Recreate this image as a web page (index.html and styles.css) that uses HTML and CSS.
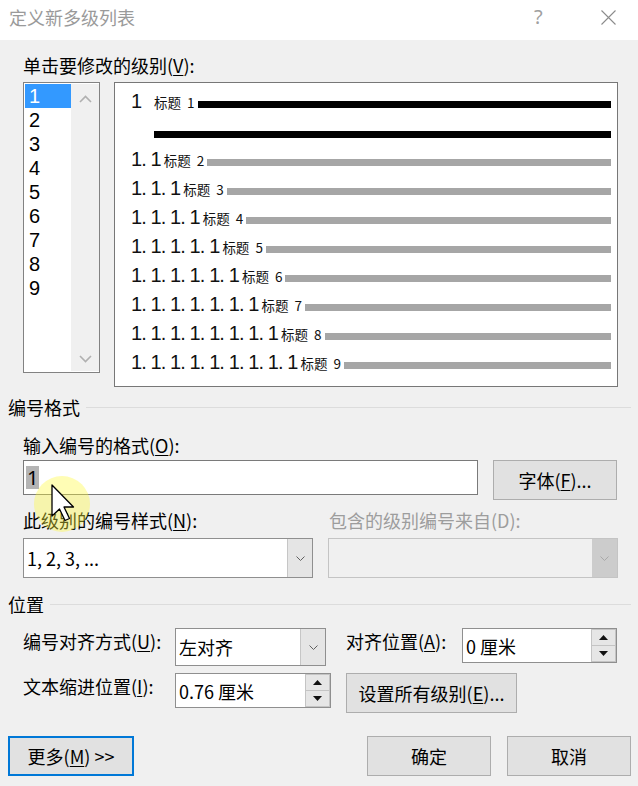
FILE: index.html
```html
<!DOCTYPE html>
<html lang="zh-CN">
<head>
  <meta charset="UTF-8">
  <title>定义新多级列表</title>
  <link rel="stylesheet" href="styles.css">
</head>
<body>
  <div class="titlebar">
    <span class="title">定义新多级列表</span>
    <span class="help">?</span>
    <svg class="close" width="15" height="15" viewBox="0 0 15 15"><path d="M0.5 0.5L14.5 14.5M14.5 0.5L0.5 14.5" stroke="#8c8c8c" stroke-width="1.1"/></svg>
  </div>

  <div class="content">
    <div class="field-label">单击要修改的级别(<u>V</u>):</div>
    <div class="levels">
      <div class="level-list">
        <ul>
          <li class="selected">1</li>
          <li>2</li>
          <li>3</li>
          <li>4</li>
          <li>5</li>
          <li>6</li>
          <li>7</li>
          <li>8</li>
          <li>9</li>
        </ul>
        <div class="scrollbar">
          <svg width="13" height="8" viewBox="0 0 13 8"><polyline points="1,7 6.5,1.5 12,7" fill="none" stroke="#b0b0b0" stroke-width="1.6"/></svg>
          <svg width="13" height="8" viewBox="0 0 13 8"><polyline points="1,1 6.5,6.5 12,1" fill="none" stroke="#b0b0b0" stroke-width="1.6"/></svg>
        </div>
      </div>
      <div class="preview">
        <div class="pline"><span class="num first">1</span><span class="ttl">标题 1</span><span class="bar black"></span></div>
        <div class="pline wrap-line"><span class="bar black"></span></div>
        <div class="pline"><span class="num">1. 1</span><span class="ttl">标题 2</span><span class="bar"></span></div>
        <div class="pline"><span class="num">1. 1. 1</span><span class="ttl">标题 3</span><span class="bar"></span></div>
        <div class="pline"><span class="num">1. 1. 1. 1</span><span class="ttl">标题 4</span><span class="bar"></span></div>
        <div class="pline"><span class="num">1. 1. 1. 1. 1</span><span class="ttl">标题 5</span><span class="bar"></span></div>
        <div class="pline"><span class="num">1. 1. 1. 1. 1. 1</span><span class="ttl">标题 6</span><span class="bar"></span></div>
        <div class="pline"><span class="num">1. 1. 1. 1. 1. 1. 1</span><span class="ttl">标题 7</span><span class="bar"></span></div>
        <div class="pline"><span class="num">1. 1. 1. 1. 1. 1. 1. 1</span><span class="ttl">标题 8</span><span class="bar"></span></div>
        <div class="pline"><span class="num">1. 1. 1. 1. 1. 1. 1. 1. 1</span><span class="ttl">标题 9</span><span class="bar"></span></div>
      </div>
    </div>

    <div class="group">编号格式</div>
    <div class="field-label format-label">输入编号的格式(<u>O</u>):</div>
    <div class="format-row">
      <div class="textbox"><span class="sel">1</span></div>
      <button class="btn font-btn">字体(<u>F</u>)...</button>
    </div>

    <div class="pair labels-pair">
      <span>此级别的编号样式(<u>N</u>):</span>
      <span class="disabled-text">包含的级别编号来自(D):</span>
    </div>
    <div class="pair combos-pair">
      <div class="combo">
        <span class="value">1, 2, 3, ...</span>
        <span class="drop"><svg width="9" height="5" viewBox="0 0 9 5"><polyline points="0.5,0.5 4.5,4.5 8.5,0.5" fill="none" stroke="#606060"/></svg></span>
      </div>
      <div class="combo disabled">
        <span class="value"></span>
        <span class="drop"><svg width="9" height="5" viewBox="0 0 9 5"><polyline points="0.5,0.5 4.5,4.5 8.5,0.5" fill="none" stroke="#a8a8a8"/></svg></span>
      </div>
    </div>

    <div class="group position-group">位置</div>
    <div class="position-grid">
      <span>编号对齐方式(<u>U</u>):</span>
      <div class="combo align-combo">
        <span class="value">左对齐</span>
        <span class="drop"><svg width="9" height="5" viewBox="0 0 9 5"><polyline points="0.5,0.5 4.5,4.5 8.5,0.5" fill="none" stroke="#606060"/></svg></span>
      </div>
      <span>对齐位置(<u>A</u>):</span>
      <div class="spin">
        <span class="value">0 厘米</span>
        <span class="arrows">
          <span><svg width="9" height="5" viewBox="0 0 9 5"><polygon points="0,5 4.5,0 9,5" fill="#111"/></svg></span>
          <span><svg width="9" height="5" viewBox="0 0 9 5"><polygon points="0,0 4.5,5 9,0" fill="#111"/></svg></span>
        </span>
      </div>
      <span>文本缩进位置(<u>I</u>):</span>
      <div class="spin indent-spin">
        <span class="value">0.76 厘米</span>
        <span class="arrows">
          <span><svg width="9" height="5" viewBox="0 0 9 5"><polygon points="0,5 4.5,0 9,5" fill="#111"/></svg></span>
          <span><svg width="9" height="5" viewBox="0 0 9 5"><polygon points="0,0 4.5,5 9,0" fill="#111"/></svg></span>
        </span>
      </div>
      <button class="btn all-levels">设置所有级别(<u>E</u>)...</button>
    </div>

    <div class="footer">
      <button class="btn more">更多(<u>M</u>) &gt;&gt;</button>
      <button class="btn ok">确定</button>
      <button class="btn cancel">取消</button>
    </div>
  </div>

  <div class="cursor-glow"></div>
  <svg class="cursor" width="24" height="38" viewBox="0 0 24 38">
    <path d="M1 1 L1 32 L8.5 25 L14 36.5 L18.5 34.5 L13 23 L22.5 23 Z" fill="#fff" stroke="#000" stroke-width="1.3" stroke-linejoin="round"/>
  </svg>
</body>
</html>
```

FILE: styles.css
```css
* {
  box-sizing: border-box;
}
body {
  margin: 0;
  background: #f0f0f0;
  font-family: "Noto Sans CJK SC", "Noto Sans", sans-serif;
  font-size: 18px;
  line-height: 24px;
  color: #000;
  position: relative;
}
u {
  text-underline-offset: 2px;
}

/* title bar */
.titlebar {
  height: 40px;
  background: #fff;
  display: flex;
  align-items: flex-start;
  padding: 5px 22px 0 9px;
  color: #9a9a9a;
}
.title {
  flex: 1;
}
.help {
  width: 10px;
  margin-right: 57px;
  font-family: "Noto Sans", sans-serif;
  font-size: 20px;
  color: #a0a0a0;
}
.close {
  margin-top: 5px;
}

.content {
  padding: 13px 7px 0 8px;
}
.field-label {
  margin-left: 15px;
}

/* level chooser */
.levels {
  display: flex;
  align-items: flex-start;
  gap: 14px;
  margin: 5px 0 0 15px;
}
.level-list {
  width: 77px;
  height: 291px;
  border: 1px solid #828282;
  background: #fff;
  display: flex;
  padding: 1px 0 1px 1px;
}
.level-list ul {
  width: 46px;
  margin: 0;
  padding: 0;
  list-style: none;
  font-family: "Liberation Sans", sans-serif;
  font-size: 20px;
  line-height: 23px;
}
.level-list li {
  height: 24px;
  padding: 1px 0 0 4px;
}
.level-list li.selected {
  background: #3399ff;
  color: #fff;
}
.scrollbar {
  flex: 1;
  background: #f0f0f0;
  display: flex;
  flex-direction: column;
  justify-content: space-between;
  align-items: center;
  padding: 11px 0 8px;
}

.preview {
  width: 504px;
  height: 305px;
  border: 1px solid #777;
  background: #fff;
  padding: 4px 6px 0 16px;
}
.pline {
  display: flex;
  align-items: baseline;
  height: 29px;
  line-height: 29px;
  white-space: nowrap;
}
.pline.wrap-line {
  align-items: flex-start;
}
.pline.wrap-line .bar {
  margin: 15px 0 0 23px;
}
.num {
  font-family: "Liberation Sans", sans-serif;
  font-size: 20px;
  letter-spacing: -0.9px;
  margin-right: 3px;
  color: #111;
}
.num.first {
  width: 23px;
  flex: none;
  margin-right: 0;
}
.ttl {
  font-family: "Noto Sans CJK SC", sans-serif;
  font-size: 13.5px;
  word-spacing: 3px;
  color: #111;
}
.bar {
  flex: 1;
  height: 7px;
  margin-left: 3px;
  background: #a6a6a6;
}
.bar.black {
  background: #000;
}

/* group headings */
.group {
  display: flex;
  align-items: center;
  margin-top: 8px;
}
.group::after {
  content: "";
  flex: 1;
  height: 1px;
  background: #dcdcdc;
  margin-left: 6px;
}
.position-group {
  margin-top: 14px;
}

/* number format */
.format-label {
  margin-top: 14px;
}
.format-row {
  display: flex;
  align-items: flex-start;
  margin-top: 3px;
  padding-left: 15px;
}
.textbox {
  width: 455px;
  height: 35px;
  margin-right: 15px;
  border: 1px solid #7a7a7a;
  background: #fff;
  padding: 4px 0 0 2px;
}
.textbox .sel {
  display: inline-block;
  background: #b4b4b4;
  font-family: "Noto Sans", sans-serif;
  font-size: 20px;
  line-height: 23px;
  padding: 0 1px;
}

.btn {
  font: inherit;
  color: #000;
  background: #e1e1e1;
  border: 1px solid #adadad;
  height: 40px;
  padding: 0;
}
.font-btn {
  width: 124px;
}

.pair {
  display: grid;
  grid-template-columns: 290px 290px;
  column-gap: 15px;
  padding-left: 15px;
}
.labels-pair {
  margin-top: 8px;
}
.labels-pair span + span {
  padding-left: 1px;
}
.disabled-text {
  color: #9d9d9d;
}
.combos-pair {
  margin-top: 6px;
}

.combo {
  display: flex;
  height: 40px;
  border: 1px solid #8f8f8f;
  background: #fff;
}
.combo .value {
  flex: 1;
  display: flex;
  align-items: center;
  padding-left: 3px;
}
.combo .drop {
  width: 25px;
  display: flex;
  align-items: center;
  justify-content: center;
  background: #e5e5e5;
  border-left: 1px solid #c6c6c6;
}
.combo.disabled {
  background: #f0f0f0;
  border-color: #c4c4c4;
}
.combo.disabled .drop {
  background: #cccccc;
  border-left: none;
}

/* position */
.position-grid {
  display: grid;
  grid-template-columns: 152px 171px 116px 155px;
  row-gap: 7px;
  align-items: start;
  margin-top: 12px;
  padding-left: 15px;
}
.position-grid > span {
  padding-top: 1px;
}
.align-combo {
  width: 151px;
  height: 38px;
}
.spin {
  display: flex;
  width: 155px;
  height: 35px;
  border: 1px solid #8f8f8f;
  background: #fff;
}
.indent-spin {
  width: 156px;
}
.spin .value {
  flex: 1;
  display: flex;
  align-items: center;
  padding-left: 3px;
}
.spin .arrows {
  width: 25px;
  display: flex;
  flex-direction: column;
}
.spin .arrows span {
  flex: 1;
  display: flex;
  align-items: center;
  justify-content: center;
  background: #e6e6e6;
  border: 1px solid #c4c4c4;
}
.spin .arrows span + span {
  border-top: none;
}
.all-levels {
  grid-column: 3 / 5;
  width: 171px;
}

/* footer */
.footer {
  display: flex;
  gap: 16px;
  margin-top: 23px;
}
.more {
  width: 126px;
  border: 2px solid #0078d7;
}
.ok {
  margin-left: auto;
  width: 124px;
}
.cancel {
  width: 124px;
}

/* mouse pointer highlight */
.cursor-glow {
  position: absolute;
  left: 34px;
  top: 476px;
  width: 56px;
  height: 56px;
  border-radius: 50%;
  background: rgba(255, 250, 60, 0.38);
}
.cursor {
  position: absolute;
  left: 51px;
  top: 484px;
}
```
